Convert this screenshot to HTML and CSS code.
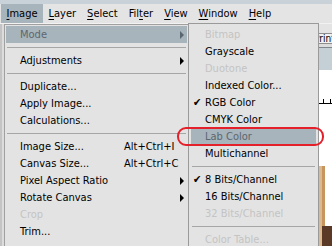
FILE: index.html
```html
<!DOCTYPE html>
<html lang="en">
<head>
    <meta charset="UTF-8">
    <title>Image menu - Mode</title>
    <link rel="stylesheet" href="styles.css">
</head>
<body>
    <div class="menubar">
        <span class="mb-item active"><u>I</u>mage</span>
        <span class="mb-item"><u>L</u>ayer</span>
        <span class="mb-item"><u>S</u>elect</span>
        <span class="mb-item">Fil<u>t</u>er</span>
        <span class="mb-item"><u>V</u>iew</span>
        <span class="mb-item"><u>W</u>indow</span>
        <span class="mb-item"><u>H</u>elp</span>
    </div>

    <div class="workspace">
        <!-- document window behind the menus -->
        <div class="doc">
            <div class="doc-top"></div>
            <div class="doc-btn">Print</div>
            <div class="doc-band"></div>
            <div class="doc-ruler"></div>
            <div class="doc-canvas">
                <div class="doc-photo"></div>
            </div>
        </div>

        <div class="menu menu-main">
            <div class="item hover"><span class="label">Mode</span><span class="arrow"></span></div>
            <div class="sep"></div>
            <div class="item"><span class="label">Adjustments</span><span class="arrow"></span></div>
            <div class="sep"></div>
            <div class="item"><span class="label">Duplicate...</span></div>
            <div class="item"><span class="label">Apply Image...</span></div>
            <div class="item"><span class="label">Calculations...</span></div>
            <div class="sep"></div>
            <div class="item"><span class="label">Image Size...</span><span class="shortcut">Alt+Ctrl+I</span></div>
            <div class="item"><span class="label">Canvas Size...</span><span class="shortcut">Alt+Ctrl+C</span></div>
            <div class="item"><span class="label">Pixel Aspect Ratio</span><span class="arrow"></span></div>
            <div class="item"><span class="label">Rotate Canvas</span><span class="arrow"></span></div>
            <div class="item disabled"><span class="label">Crop</span></div>
            <div class="item"><span class="label">Trim...</span></div>
        </div>

        <div class="menu menu-sub">
            <div class="item disabled">Bitmap</div>
            <div class="item">Grayscale</div>
            <div class="item disabled">Duotone</div>
            <div class="item">Indexed Color...</div>
            <div class="item"><span class="check">&#10004;</span>RGB Color</div>
            <div class="item">CMYK Color</div>
            <div class="item hover">Lab Color</div>
            <div class="item">Multichannel</div>
            <div class="sep"></div>
            <div class="item"><span class="check">&#10004;</span>8 Bits/Channel</div>
            <div class="item">16 Bits/Channel</div>
            <div class="item disabled">32 Bits/Channel</div>
            <div class="sep"></div>
            <div class="item disabled">Color Table...</div>
        </div>

        <!-- red callout drawn over the screenshot -->
        <div class="callout"></div>
    </div>
</body>
</html>
```

FILE: styles.css
```css
* {
    box-sizing: border-box;
}
body {
    margin: 0;
    width: 332px;
    height: 246px;
    overflow: hidden;
    font-family: "DejaVu Sans Condensed", "DejaVu Sans", sans-serif;
    font-stretch: condensed;
    font-size: 11px;
    color: #000;
    background-color: #e3e3e3;
}
.menubar {
    display: flex;
    height: 24px;
    padding: 4px 0 0 1px;
    background: linear-gradient(#c8d2d8 0 4px, #e4e4e4 4px);
    border-bottom: 1px solid #f2f2f2;
}
.mb-item {
    height: 19px;
    line-height: 19px;
    padding: 0 5.5px;
}
.mb-item u {
    text-decoration-thickness: 1px;
    text-underline-offset: 2px;
}
.mb-item.active {
    background-color: #a8b4bb;
}
.workspace {
    position: relative;
    height: 222px;
    display: flex;
    justify-content: flex-end;
    background-color: #dcdcdc;
    border-left: 2px solid #c4c4c4;
}
.doc {
    width: 50px;
    display: flex;
    flex-direction: column;
}
.doc-top {
    height: 9px;
    background-color: #e4e4e4;
}
.doc-btn {
    height: 11px;
    margin-left: 24px;
    padding-left: 7px;
    border: 1px solid #8e8e8e;
    border-right: none;
    background-color: #f2f2f2;
    font-size: 10px;
    line-height: 9px;
}
.doc-band {
    height: 23px;
    margin-top: 3px;
    border-top: 1px solid #7e878d;
    background-color: #c5cfd6;
}
.doc-ruler {
    height: 34px;
    background:
        repeating-linear-gradient(to right, transparent 0 6px, #000 6px 7px) bottom / 100% 5px no-repeat,
        linear-gradient(#000, #000) bottom / 100% 1px no-repeat,
        #fff;
}
.doc-canvas {
    flex: 1;
    display: flex;
    flex-direction: column;
    background-color: #fff;
}
.doc-photo {
    flex: 1;
    margin-top: 62px;
    background:
        linear-gradient(to right, transparent 0 40px, #5a3a26 40px) bottom / 100% 20px no-repeat,
        linear-gradient(to right, transparent 0 37px, #dcb98e 37px 40px, #c7955e 40px 43px, #fff 43px);
}

.menu {
    position: absolute;
    background-color: #e3e3e3;
    border: 1px solid #a0a0a0;
    padding: 1px;
}
.menu-main {
    left: 2px;
    top: 0;
    width: 185px;
    padding-bottom: 20px;
}
.menu-sub {
    left: 186px;
    top: -1px;
    width: 131px;
    padding: 2px;
    border-color: #9a9a9a;
}
.item {
    position: relative;
    display: flex;
    align-items: center;
    height: 17px;
    line-height: 17px;
    padding: 0 3px 0 14px;
    white-space: nowrap;
}
.label {
    width: 104px;
}
.shortcut {
    flex: 1;
}
.arrow {
    margin-left: auto;
    width: 0;
    height: 0;
    border-left: 4px solid #000;
    border-top: 4px solid transparent;
    border-bottom: 4px solid transparent;
}
.item.hover {
    background-color: #a8b4bb;
    color: #5b6770;
}
.item.hover .arrow {
    border-left-color: #5b6770;
}
.item.disabled {
    color: #c4c4c4;
}
.check {
    position: absolute;
    left: 2px;
    font-size: 11px;
    font-weight: bold;
}
.sep {
    height: 9px;
    display: flex;
    align-items: center;
    padding: 0 1px;
}
.sep::before {
    content: "";
    flex: 1;
    height: 1px;
    background-color: #a6a6a6;
}
.callout {
    position: absolute;
    left: 175px;
    top: 103px;
    width: 147px;
    height: 19px;
    border: 2px solid #e4202a;
    border-radius: 9px;
}
```
